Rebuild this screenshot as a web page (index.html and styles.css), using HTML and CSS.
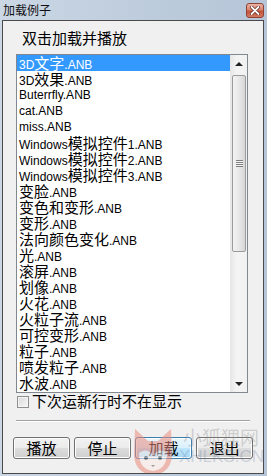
FILE: index.html
```html
<!DOCTYPE html>
<html lang="zh-CN">
<head>
    <meta charset="UTF-8">
    <meta name="viewport" content="width=device-width, initial-scale=1.0">
    <title>加载例子</title>
    <link rel="stylesheet" href="styles.css">
</head>
<body>
    <div class="window">
        <div class="titlebar">
            <span class="title">加载例子</span>
            <div class="btn-close">
                <svg width="10" height="9" viewBox="0 0 10 9">
                    <path d="M1.5 1 L8.5 8 M8.5 1 L1.5 8" stroke="#5a2318" stroke-width="3.2" stroke-linecap="round"/>
                    <path d="M1.5 1 L8.5 8 M8.5 1 L1.5 8" stroke="#fff" stroke-width="1.8" stroke-linecap="round"/>
                </svg>
            </div>
        </div>

        <div class="client">
            <div class="heading">双击加载并播放</div>

            <div class="listbox">
                <ul class="items">
                    <li class="selected">3D<span class="cn">文字</span>.ANB</li>
                    <li>3D<span class="cn">效果</span>.ANB</li>
                    <li>Buterrfly.ANB</li>
                    <li>cat.ANB</li>
                    <li>miss.ANB</li>
                    <li>Windows<span class="cn">模拟控件</span>1.ANB</li>
                    <li>Windows<span class="cn">模拟控件</span>2.ANB</li>
                    <li>Windows<span class="cn">模拟控件</span>3.ANB</li>
                    <li><span class="cn">变脸</span>.ANB</li>
                    <li><span class="cn">变色和变形</span>.ANB</li>
                    <li><span class="cn">变形</span>.ANB</li>
                    <li><span class="cn">法向颜色变化</span>.ANB</li>
                    <li><span class="cn">光</span>.ANB</li>
                    <li><span class="cn">滚屏</span>.ANB</li>
                    <li><span class="cn">划像</span>.ANB</li>
                    <li><span class="cn">火花</span>.ANB</li>
                    <li><span class="cn">火粒子流</span>.ANB</li>
                    <li><span class="cn">可控变形</span>.ANB</li>
                    <li><span class="cn">粒子</span>.ANB</li>
                    <li><span class="cn">喷发粒子</span>.ANB</li>
                    <li><span class="cn">水波</span>.ANB</li>
                    <li><span class="cn">下雪</span>.ANB</li>
                </ul>
                <div class="scrollbar">
                    <div class="arrow"><span class="tri-up"></span></div>
                    <div class="track">
                        <div class="thumb"><span class="grip"></span></div>
                    </div>
                    <div class="arrow"><span class="tri-down"></span></div>
                </div>
            </div>

            <label class="check-row"><span class="checkbox"></span><span class="check-text">下次运新行时不在显示</span></label>

            <div class="separator"></div>

            <div class="buttons">
                <div class="btn">播放</div>
                <div class="btn">停止</div>
                <div class="btn btn-focus">加载</div>
                <div class="btn">退出</div>
            </div>

            <!-- watermark over the buttons -->
            <div class="watermark">
                <svg class="fox" width="42" height="50" viewBox="0 0 42 50">
                    <path d="M3 2 L16 14 L26 14 L39 2 L40 26 Q40 46 21 48 Q2 46 2 26 Z" fill="#e98b7d"/>
                    <path d="M7 26 Q14 20 21 28 Q28 20 35 26 Q35 42 21 44 Q7 42 7 26 Z" fill="#fbe9e5"/>
                    <circle cx="14" cy="31" r="2" fill="#444"/>
                    <circle cx="28" cy="31" r="2" fill="#444"/>
                    <path d="M19 38 L23 38 L21 40 Z" fill="#555"/>
                </svg>
                <span class="wm-cn">小狐狸网</span>
                <span class="wm-en">XHLKS.CN</span>
            </div>
        </div>
    </div>
</body>
</html>
```

FILE: styles.css
```css
body {
    margin: 0;
    padding: 0;
    font-family: "Liberation Sans", "Noto Sans CJK SC", sans-serif;
    background-color: #c3d1e0;
}

.window {
    width: 267px;
    height: 476px;
    box-sizing: border-box;
    padding: 0 3px 2px 2px;
    display: flex;
    flex-direction: column;
    background: linear-gradient(to right, #cbd7e4, #bccbdc 60%, #b6c6d8);
}

.titlebar {
    height: 20px;
    display: flex;
    align-items: center;
    justify-content: space-between;
}

.title {
    padding-left: 1px;
    font-family: "Noto Sans CJK SC", sans-serif;
    font-size: 12px;
    line-height: 20px;
    color: #111;
}

.btn-close {
    width: 18px;
    height: 15px;
    margin-top: 1px;
    box-sizing: border-box;
    border: 1px solid #8e4336;
    border-radius: 3px;
    background: linear-gradient(#eab2a3, #d9826d 45%, #c2533c 55%, #d47a5e);
    display: flex;
    align-items: center;
    justify-content: center;
}

.client {
    position: relative;
    flex: 1;
    overflow: hidden;
    border: 1px solid #4a4a4a;
    background-color: #f0f0f0;
    padding-top: 7px;
}

.heading {
    margin-left: 19px;
    height: 20px;
    line-height: 20px;
    font-family: "Noto Sans CJK SC", sans-serif;
    font-size: 15px;
    color: #000;
}

/* list box with scroll bar */
.listbox {
    margin: 6px 0 0 13px;
    width: 232px;
    height: 339px;
    box-sizing: border-box;
    border: 1px solid #828790;
    background-color: #fff;
    display: flex;
}

.items {
    flex: 1;
    margin: 0;
    padding: 0;
    list-style: none;
    overflow: hidden;
}

.items li {
    height: 16px;
    line-height: 16px;
    padding-left: 2px;
    font-size: 12px;
    color: #000;
    white-space: nowrap;
}

.items li.selected {
    background-color: #3399ff;
    color: #fff;
}

.cn {
    font-family: "Noto Sans CJK SC", sans-serif;
    font-size: 15px;
    line-height: 16px;
}

.scrollbar {
    width: 17px;
    display: flex;
    flex-direction: column;
    background: linear-gradient(to right, #e6e6e6, #f4f4f4 40%, #f1f1f1);
}

.arrow {
    height: 17px;
    display: flex;
    align-items: center;
    justify-content: center;
}

.tri-up {
    border-left: 4px solid transparent;
    border-right: 4px solid transparent;
    border-bottom: 4px solid #222;
}

.tri-down {
    border-left: 4px solid transparent;
    border-right: 4px solid transparent;
    border-top: 4px solid #222;
}

.track {
    flex: 1;
    padding: 3px 1px 0 2px;
}

.thumb {
    height: 177px;
    box-sizing: border-box;
    border: 1px solid #9b9b9b;
    border-radius: 2px;
    background: linear-gradient(to right, #f3f3f3, #e8e8e8 50%, #d6d6d6);
    display: flex;
    align-items: center;
    justify-content: center;
}

.grip {
    width: 7px;
    height: 7px;
    background: repeating-linear-gradient(#7c7c7c 0 1px, #f6f6f6 1px 2px);
}

/* checkbox row */
.check-row {
    margin: 1px 0 0 14px;
    height: 16px;
    display: flex;
    align-items: center;
    gap: 3px;
}

.check-text {
    font-family: "Noto Sans CJK SC", sans-serif;
    font-size: 15px;
    line-height: 16px;
    color: #000;
    margin-top: -2px;
}

.checkbox {
    width: 12px;
    height: 12px;
    box-sizing: border-box;
    border: 1px solid #8e8f8f;
    background: linear-gradient(135deg, #d9d9d9, #f7f7f7);
    box-shadow: inset 0 0 0 1px #f4f4f4;
}

.separator {
    margin: 10px 0 0 13px;
    width: 234px;
    height: 1px;
    background-color: #a0a0a0;
    border-bottom: 1px solid #fff;
}

/* push buttons */
.buttons {
    margin: 15px 0 0 10px;
    display: flex;
    gap: 4px;
}

.btn {
    width: 57px;
    height: 22px;
    box-sizing: border-box;
    border: 1px solid #707070;
    border-radius: 3px;
    background: linear-gradient(#f2f2f2, #ebebeb 50%, #dddddd 50%, #cfcfcf);
    box-shadow: inset 0 0 0 1px #fcfcfc;
    font-family: "Noto Sans CJK SC", sans-serif;
    font-size: 15px;
    line-height: 20px;
    text-align: center;
    color: #000;
}

.btn-focus {
    border-color: #3c7fb1;
    background: linear-gradient(#eaf6fd, #d9f0fc 50%, #bee6fd 50%, #a7d9f5);
    box-shadow: inset 0 0 0 1px #fff;
}

.watermark {
    position: absolute;
    left: 129px;
    top: 406px;
    width: 130px;
    height: 50px;
    pointer-events: none;
}

.fox {
    position: absolute;
    left: 0;
    top: 0;
    opacity: 0.55;
}

.wm-cn {
    position: absolute;
    left: 51px;
    top: -2px;
    font-family: "Noto Sans CJK SC", sans-serif;
    font-size: 19px;
    line-height: 24px;
    color: rgba(140, 140, 140, 0.35);
}

.wm-en {
    position: absolute;
    left: 47px;
    top: 20px;
    font-family: "Liberation Sans", sans-serif;
    font-size: 17px;
    line-height: 20px;
    color: rgba(110, 130, 165, 0.3);
}
```
